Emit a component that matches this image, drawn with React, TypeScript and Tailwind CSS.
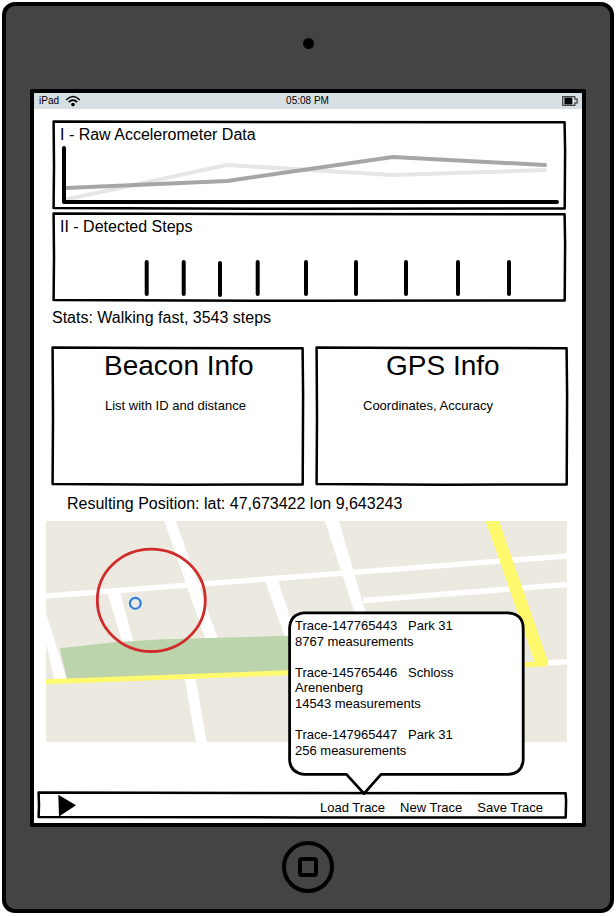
import React from "react";

type Point = [number, number];

/** Hand-drawn rectangle outline that decorates its parent box. */
function SketchBorder({ w, h, bow = 0.7 }: { w: number; h: number; bow?: number }) {
  const d = `M1.6 1.6 L${w * 0.4} 2 L${w - 1.4} 2.2 L${w - 0.9} ${h * 0.35} L${w - 1.3} ${h - 1.6} L${w * 0.5} ${h - 1.9 + bow} L1.6 ${h - 2} L2 ${h * 0.5} Z`;
  return (
    <svg className="pointer-events-none absolute inset-0 overflow-visible" width={w} height={h} viewBox={`0 0 ${w} ${h}`} fill="none">
      <path d={d} stroke="#000" strokeWidth="2.5" strokeLinejoin="round" />
    </svg>
  );
}

function StatusBar() {
  return (
    <div className="flex h-4 items-center bg-[#d7dfe2] text-[10px] leading-4">
      <div className="flex flex-1 items-center pl-[5px]">
        <span>iPad</span>
        <svg className="ml-[6px]" width="16" height="12" viewBox="0 0 16 12" fill="none">
          <path d="M1.2 5 Q8 -1.8 14.8 5" stroke="#000" strokeWidth="1.5" />
          <path d="M3.8 7.2 Q8 3.2 12.2 7.2" stroke="#000" strokeWidth="1.6" />
          <circle cx="8" cy="9.6" r="1.8" fill="#000" />
        </svg>
      </div>
      <span className="-ml-px mr-px">05:08 PM</span>
      <div className="flex flex-1 justify-end pr-1">
        <svg width="16" height="10" viewBox="0 0 16 10" fill="none">
          <path d="M0.7 0.7 H12.8 V3.2 H15.2 V6.8 H12.8 V9.3 H0.7 Z" stroke="#444" strokeWidth="1.3" />
          <rect x="2.4" y="1.6" width="7.9" height="6.8" fill="#000" />
        </svg>
      </div>
    </div>
  );
}

const lightSeries: Point[] = [[14, 79.5], [175, 45], [341, 55], [493, 50]];
const darkSeries: Point[] = [[14, 68], [175, 61], [341, 37], [493, 45]];
const toPoints = (points: Point[]) => points.map((p) => p.join(",")).join(" ");

function AccelerometerPanel() {
  return (
    <section className="relative h-[90px] w-[514px]">
      <SketchBorder w={514} h={90} />
      <h2 className="pl-2 pt-[5px] text-base leading-5">I - Raw Accelerometer Data</h2>
      <svg className="absolute inset-0" width="514" height="90" viewBox="0 0 514 90" fill="none" strokeLinecap="round" strokeLinejoin="round">
        <polyline points={toPoints(lightSeries)} stroke="#e6e6e6" strokeWidth="4" />
        <polyline points={toPoints(darkSeries)} stroke="#a6a6a6" strokeWidth="4" />
        <path d="M12 28 V82 H505" stroke="#000" strokeWidth="4" />
      </svg>
    </section>
  );
}

const steps = [94.7, 131.7, 168, 205.7, 254, 304, 354, 406, 457];

function StepsPanel() {
  return (
    <section className="relative mt-[2px] h-[90px] w-[514px]">
      <SketchBorder w={514} h={90} />
      <h2 className="pl-2 pt-[5px] text-base leading-5">II - Detected Steps</h2>
      <svg className="absolute inset-0" width="514" height="90" viewBox="0 0 514 90">
        {steps.map((x, i) => (
          <path key={x} d={i === 2 ? `M${x} 51 V83` : `M${x} 50 V82`} stroke="#000" strokeWidth="4" strokeLinecap="round" />
        ))}
      </svg>
    </section>
  );
}

function PositionMap() {
  return (
    <svg className="ml-3 mt-[7px] block shrink-0" width="521" height="221" viewBox="46 521 521 221">
      <rect x="46" y="521" width="521" height="221" fill="#ece9e1" />
      <g fill="#fff">
        <path d="M164.3 521H175.7L217.7 638H205Z" />
        <path d="M107.3 593L120 592L133.5 642H122.3Z" />
        <path d="M46 613L66.7 679H54L46 643Z" />
        <path d="M265 581L277.7 580L298 640H286Z" />
        <path d="M185 679H195.7L206.7 742H195.7Z" />
        <path d="M325 521H339L366 614H355Z" />
      </g>
      <g stroke="#fff" strokeWidth="5.4">
        <path d="M46 596L567 556" />
        <path d="M363 600.5L567 584.5" />
        <path d="M540 663.5L567 661.7" />
      </g>
      <path d="M60 648.3L113.3 642.3L163 639.3L290 635.7V674L67 680Z" fill="#bbd4ac" />
      <path d="M46 681.7L288 672.7L545 664" stroke="#fff96d" strokeWidth="5" fill="none" />
      <path d="M485.7 521H499L548 661.5V666H536Z" fill="#fff96d" />
      <ellipse cx="151.3" cy="600.3" rx="54" ry="51.2" fill="none" stroke="#d12b2b" strokeWidth="2.8" />
      <circle cx="135.3" cy="603.3" r="5.4" fill="none" stroke="#2a7de1" strokeWidth="2.1" />
    </svg>
  );
}

function TracePopover() {
  return (
    <div className="absolute left-[254px] top-[518px] h-[185px] w-[238px]">
      <svg className="absolute inset-0" width="238" height="185" viewBox="0 0 238 185">
        <path
          d="M16 1.8H220Q235.2 2.8 235.2 17.5V149Q234 162.8 220 163.4H93L76 182.6L58.5 163.4H16Q2.2 161.5 1.6 149V17.5Q2 3.2 16 1.8Z"
          fill="#fff"
          stroke="#000"
          strokeWidth="2.8"
          strokeLinejoin="round"
        />
      </svg>
      <div className="relative whitespace-pre pl-[7px] pt-[7px] text-[13px] leading-[15.6px]">
        <p>Trace-147765443   Park 31</p>
        <p>8767 measurements</p>
        <p className="mt-[15.6px]">Trace-145765446   Schloss</p>
        <p>Arenenberg</p>
        <p>14543 measurements</p>
        <p className="mt-[15.6px]">Trace-147965447   Park 31</p>
        <p>256 measurements</p>
      </div>
    </div>
  );
}

function Toolbar() {
  return (
    <div className="relative ml-[3px] mt-[49px] flex h-7 w-[530px] items-center pl-5 pr-6 text-[13px]">
      <SketchBorder w={530} h={28} bow={0.3} />
      <svg className="relative mt-[2px]" width="20" height="24" viewBox="0 0 20 24">
        <path d="M1.3 0.8L19 11.2L2 22.6Z" fill="#000" />
      </svg>
      <div className="relative ml-auto flex gap-[15px] pt-[6px] leading-5">
        <button>Load Trace</button>
        <button>New Trace</button>
        <button>Save Trace</button>
      </div>
    </div>
  );
}

export default function App() {
  return (
    <div className="h-[916px] w-[616px] overflow-hidden bg-white pl-[2px] pt-[2px] font-['Liberation_Sans',Arial,sans-serif] text-black">
      <div className="flex h-[911px] w-[612px] flex-col items-center rounded-[13px] border-4 border-black bg-[#444]">
        <div className="mt-[32px] h-[11px] w-[11px] shrink-0 rounded-full bg-black" />
        <main className="relative mt-[40px] flex h-[738px] w-[556px] shrink-0 flex-col rounded-[2px] border-4 border-black bg-white">
          <StatusBar />
          <div className="ml-[18px] mt-[11px] flex flex-col">
            <AccelerometerPanel />
            <StepsPanel />
          </div>
          <p className="ml-[18px] mt-[6px] text-base leading-5">Stats: Walking fast, 3543 steps</p>
          <div className="ml-[17px] mt-[18px] flex gap-[11px]">
            <section className="relative h-[140px] w-[253px]">
              <SketchBorder w={253} h={140} />
              <h1 className="pl-[53px] pt-1 text-[28px] leading-8">Beacon Info</h1>
              <p className="pl-[54px] pt-[14px] text-[13px] leading-5">List with ID and distance</p>
            </section>
            <section className="relative h-[140px] w-[253px]">
              <SketchBorder w={253} h={140} />
              <h1 className="pl-[71px] pt-1 text-[28px] leading-8">GPS Info</h1>
              <p className="pl-[48px] pt-[14px] text-[13px] leading-5">Coordinates, Accuracy</p>
            </section>
          </div>
          <p className="ml-[33px] mt-2 text-base leading-5">Resulting Position: lat: 47,673422 lon 9,643243</p>
          <PositionMap />
          <Toolbar />
          <TracePopover />
        </main>
        <div className="mt-[14px] flex h-[52px] w-[52px] shrink-0 items-center justify-center rounded-full border-4 border-black">
          <div className="h-5 w-5 rounded-[4px] border-4 border-black" />
        </div>
      </div>
    </div>
  );
}
